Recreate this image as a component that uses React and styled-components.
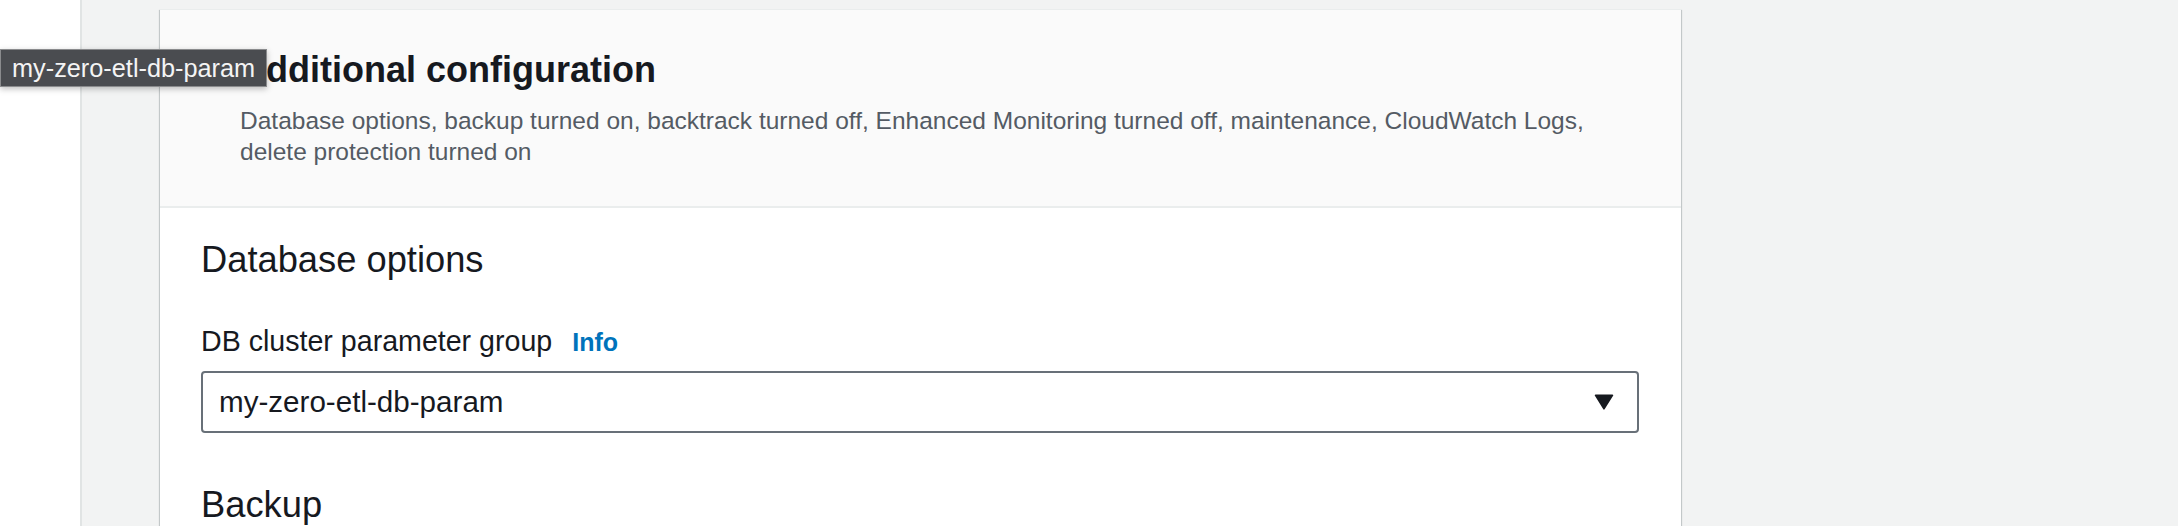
import React from "react";
import styled, { createGlobalStyle } from "styled-components";

const Global = createGlobalStyle`
  html, body { margin: 0; padding: 0; }
  body {
    font-family: "Liberation Sans", Arial, sans-serif;
    background: #f2f3f3;
    overflow: hidden;
    height: 526px;
  }
`;

const Page = styled.div`
  position: relative;
  display: flex;
  height: 526px;
  overflow: hidden;
`;

const SideNav = styled.div`
  width: 80px;
  flex: none;
  background: #ffffff;
  border-right: 2px solid #e1e4e4;
`;

const Main = styled.main`
  flex: 1;
  display: flex;
  align-items: flex-start;
  padding: 9px 0 0 78px;
  background: #f2f3f3;
`;

const Card = styled.section`
  width: 1521px;
  flex: none;
  background: #ffffff;
  border-top: 1px solid #eaeded;
  box-shadow: 0 1px 1px 0 rgba(0, 28, 36, 0.3), 1px 1px 1px 0 rgba(0, 28, 36, 0.15),
    -1px 1px 1px 0 rgba(0, 28, 36, 0.15);
`;

const Header = styled.header`
  background: #fafafa;
  border-bottom: 2px solid #eaeded;
  padding: 38px 40px 39px 30px;
  display: flex;
  gap: 26px;
`;

const Caret = styled.svg`
  width: 24px;
  height: 24px;
  flex: none;
  margin-top: 10px;
`;

const HeaderText = styled.div`
  display: flex;
  flex-direction: column;
`;

const Title = styled.h2`
  margin: 0;
  font-size: 36px;
  line-height: 44px;
  font-weight: 700;
  color: #16191f;
`;

const Description = styled.p`
  margin: 13px 0 0;
  font-size: 24.5px;
  line-height: 31px;
  color: #545b64;
  max-width: 1380px;
`;

const Body = styled.div`
  padding: 30px 42px 60px 41px;
  display: flex;
  flex-direction: column;
`;

const SectionTitle = styled.h3`
  margin: 0;
  font-size: 36.3px;
  line-height: 44px;
  font-weight: 400;
  color: #16191f;
  margin-top: ${(p) => p.$gap || 0}px;
`;

const Field = styled.div`
  margin-top: 41px;
  display: flex;
  flex-direction: column;
  gap: 11px;
`;

const LabelRow = styled.div`
  display: flex;
  align-items: baseline;
  gap: 20px;
  line-height: 36px;
`;

const Label = styled.span`
  font-size: 28.6px;
  color: #16191f;
`;

const InfoLink = styled.a`
  font-size: 25px;
  font-weight: 700;
  color: #0073bb;
  text-decoration: none;
`;

const Select = styled.div`
  height: 62px;
  box-sizing: border-box;
  border: 2px solid #687078;
  border-radius: 4px;
  display: flex;
  align-items: center;
  justify-content: space-between;
  padding: 0 23px 0 16px;
  font-size: 29.6px;
  color: #16191f;
`;

const Tooltip = styled.div`
  position: absolute;
  left: 0;
  top: 49px;
  height: 38px;
  box-sizing: border-box;
  padding: 0 11px 0 11px;
  display: flex;
  align-items: center;
  background: #4a4c50;
  border: 1px solid #8a8b8d;
  box-shadow: 0 2px 6px rgba(0, 0, 0, 0.25);
  color: #f4f4f4;
  font-size: 25.3px;
  white-space: nowrap;
`;

export default function App() {
  return (
    <>
      <Global />
      <Page>
        <SideNav />
        <Main>
          <Card>
            <Header>
              <Caret viewBox="0 0 16 16">
                <path d="M4 5h8l-4 6z" fill="#545b64" />
              </Caret>
              <HeaderText>
                <Title>Additional configuration</Title>
                <Description>
                  Database options, backup turned on, backtrack turned off, Enhanced Monitoring turned off,
                  maintenance, CloudWatch Logs, delete protection turned on
                </Description>
              </HeaderText>
            </Header>
            <Body>
              <SectionTitle>Database options</SectionTitle>
              <Field>
                <LabelRow>
                  <Label>DB cluster parameter group</Label>
                  <InfoLink href="#">Info</InfoLink>
                </LabelRow>
                <Select>
                  <span>my-zero-etl-db-param</span>
                  <svg width="20" height="18" viewBox="0 0 20 18">
                    <path d="M1.5 1.5h17a0.8 0.8 0 0 1 0.6 1.3l-8.5 13.4a0.8 0.8 0 0 1-1.3 0L0.9 2.8a0.8 0.8 0 0 1 0.6-1.3z" fill="#16191f" />
                  </svg>
                </Select>
              </Field>
              <SectionTitle $gap={50}>Backup</SectionTitle>
            </Body>
          </Card>
        </Main>
        <Tooltip>my-zero-etl-db-param</Tooltip>
      </Page>
    </>
  );
}
